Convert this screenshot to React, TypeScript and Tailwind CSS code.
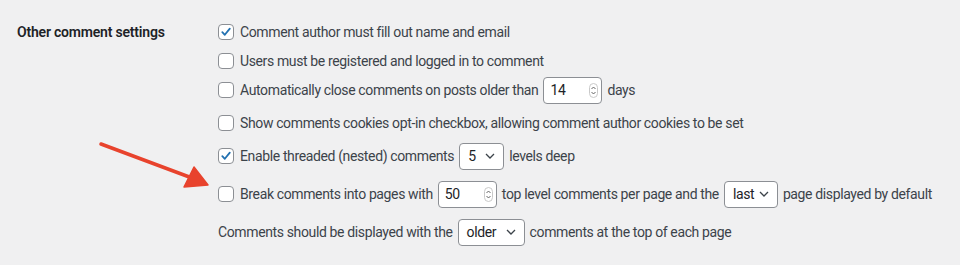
import React from "react";

const font = { fontFamily: 'Roboto, "Liberation Sans", Arial, sans-serif' };

function Checkbox({ checked }: { checked?: boolean }) {
  return (
    <span className="w-4 h-4 shrink-0 rounded-[4px] border border-[#8c8f94] bg-white flex items-center justify-center mr-[6px]">
      {checked && (
        <svg width="12" height="12" viewBox="0 0 12 12" fill="none">
          <path d="M2.3 6.2 L4.8 8.8 L9.8 2.6" stroke="#2271b1" strokeWidth="1.8" strokeLinecap="round" strokeLinejoin="round" />
        </svg>
      )}
    </span>
  );
}

function NumberBox({ value, width }: { value: string; width: string }) {
  return (
    <span className={`${width} h-[27px] mx-[5px] shrink-0 rounded-[4px] border border-[#8c8f94] bg-white flex items-center justify-between pl-[6px] pr-[3px] text-[#1d2327]`}>
      <span>{value}</span>
      {/* spinner */}
      <svg width="9" height="15" viewBox="0 0 9 15" fill="none">
        <rect x="0.5" y="0.5" width="8" height="14" rx="4" stroke="#c9c9c9" />
        <path d="M2.5 6 L4.5 4 L6.5 6" stroke="#555" strokeWidth="0.9" />
        <path d="M2.5 9 L4.5 11 L6.5 9" stroke="#555" strokeWidth="0.9" />
      </svg>
    </span>
  );
}

function SelectBox({ value, width }: { value: string; width: string }) {
  return (
    <span className={`${width} h-[27px] mx-[5px] shrink-0 rounded-[4px] border border-[#8c8f94] bg-white flex items-center justify-between pl-[8px] pr-[8px] text-[#1d2327]`}>
      <span>{value}</span>
      <svg width="10" height="6" viewBox="0 0 10 6" fill="none">
        <path d="M1 1 L5 5 L9 1" stroke="#3c434a" strokeWidth="1.3" />
      </svg>
    </span>
  );
}

export default function App() {
  return (
    <div className="w-[960px] h-[265px] bg-[#f0f0f1] relative text-[14px] text-[#3c434a] tracking-[-0.37px] whitespace-nowrap" style={font}>
      <div className="flex">
        {/* Label column */}
        <div className="w-[218px] shrink-0 pl-[17px] pt-[18px]">
          <div className="h-[28px] flex items-center font-semibold text-[#1d2327] tracking-[-0.2px]">Other comment settings</div>
        </div>

        {/* Options */}
        <div className="flex flex-col pt-[18px]">
          <div className="h-[28px] flex items-center">
            <Checkbox checked />
            <span>Comment author must fill out name and email</span>
          </div>
          <div className="h-[28px] mt-[1px] flex items-center">
            <Checkbox />
            <span>Users must be registered and logged in to comment</span>
          </div>
          <div className="h-[28px] mt-[1px] flex items-center">
            <Checkbox />
            <span>Automatically close comments on posts older than</span>
            <NumberBox value="14" width="w-[59px]" />
            <span>days</span>
          </div>
          <div className="h-[28px] mt-[5px] flex items-center">
            <Checkbox />
            <span>Show comments cookies opt-in checkbox, allowing comment author cookies to be set</span>
          </div>
          <div className="h-[28px] mt-[5px] flex items-center">
            <Checkbox checked />
            <span>Enable threaded (nested) comments</span>
            <SelectBox value="5" width="w-[45px]" />
            <span>levels deep</span>
          </div>
          <div className="h-[28px] mt-[10px] flex items-center">
            <Checkbox />
            <span>Break comments into pages with</span>
            <NumberBox value="50" width="w-[59px]" />
            <span>top level comments per page and the</span>
            <SelectBox value="last" width="w-[54px]" />
            <span>page displayed by default</span>
          </div>
          <div className="h-[28px] mt-[10px] flex items-center">
            <span>Comments should be displayed with the</span>
            <SelectBox value="older" width="w-[67px]" />
            <span>comments at the top of each page</span>
          </div>
        </div>
      </div>

      {/* Annotation arrow */}
      <svg className="absolute left-0 top-0 pointer-events-none" width="960" height="265" viewBox="0 0 960 265">
        <line x1="101" y1="144" x2="192" y2="178" stroke="#e8432d" strokeWidth="3.5" strokeLinecap="round" />
        <polygon points="208,185 184,187 194,167" fill="#e8432d" stroke="#e8432d" strokeWidth="1.5" strokeLinejoin="round" />
      </svg>
    </div>
  );
}
